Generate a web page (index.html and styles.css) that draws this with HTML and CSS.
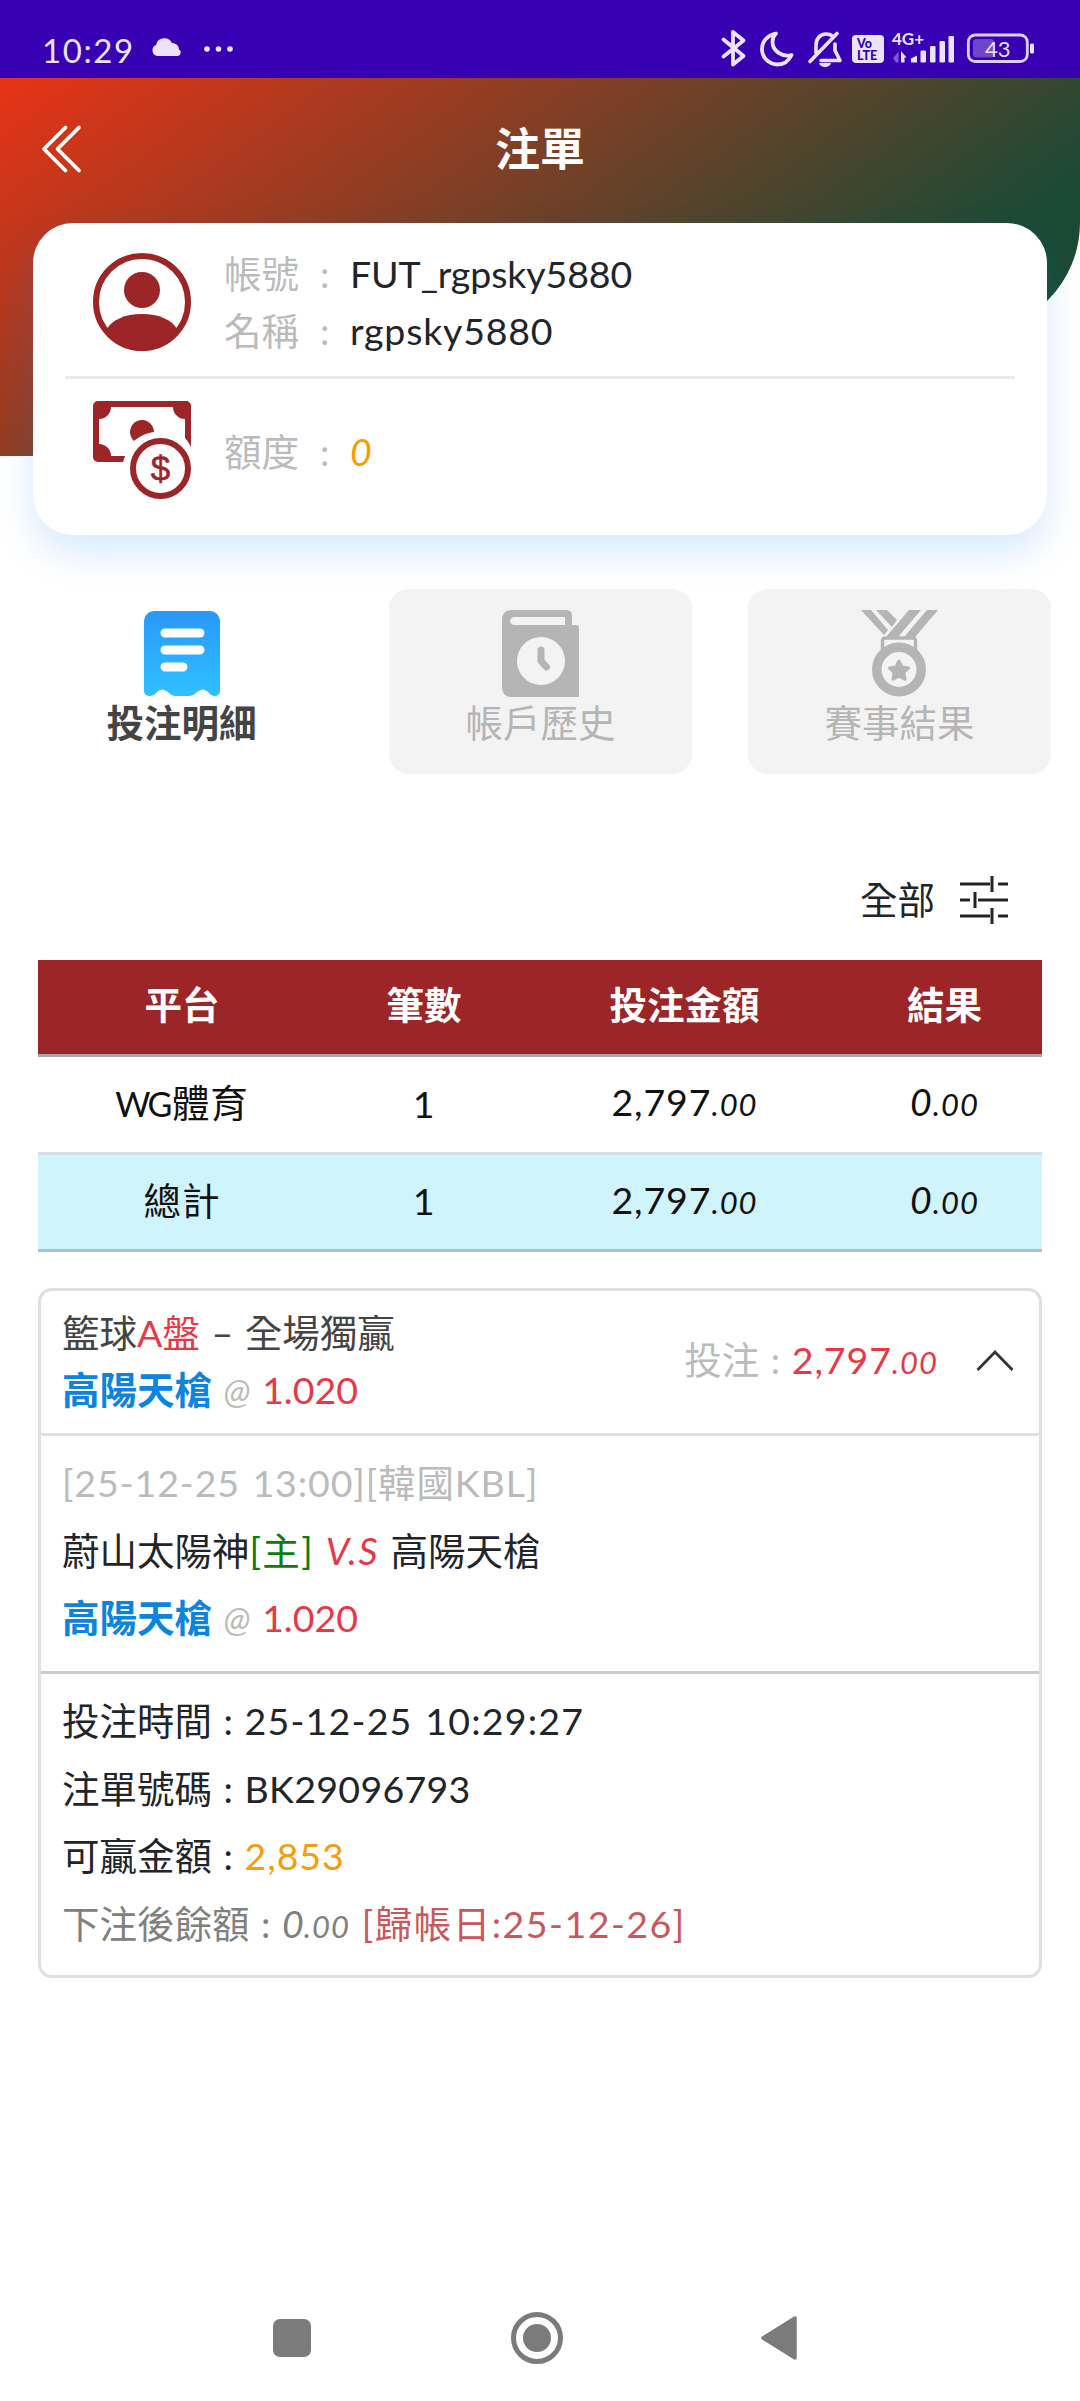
FILE: index.html
```html
<!DOCTYPE html>
<html lang="zh-Hant">
<head>
<meta charset="utf-8">
<title>注單</title>
<link rel="stylesheet" href="styles.css">
</head>
<body>
<div class="status">
  <div class="status-left">
    <span class="clock">10:29</span>
    <svg class="cloud" width="32" height="20" viewBox="0 0 32 20"><path d="M6 19a5.800 5.800 0 0 1-1-11A8.500 8.500 0 0 1 21 6a6.500 6.500 0 0 1 7 6.500 3.500 3.500 0 0 1-1 6.500z"/></svg>
    <svg class="dots" width="30" height="6" viewBox="0 0 30 6"><circle cx="3" cy="3" r="2.800"/><circle cx="14.500" cy="3" r="2.800"/><circle cx="26" cy="3" r="2.800"/></svg>
  </div>
  <svg class="status-icons" width="330" height="60" viewBox="715 20 330 60">
    <g fill="none" stroke="#ebe3fb" stroke-width="3.800" stroke-linejoin="round" stroke-linecap="round">
      <path d="M723.500 39.500 743.500 56 733 64.500V32l10.500 8.500-20 16"/>
      <path d="M776 33.500c-8 1.500-14 7.500-14 15.500a15.500 15.500 0 0 0 15.500 15.500c6.500 0 11.500-4 14-9.500-9 2.500-19-4-19-13 0-3.500 1.500-6.500 3.500-8.500z"/>
      <path d="M837 33.500 810 61.500M816 53v-8c0-6 4-11 10-11 3 0 5 .8 6.500 2M835 44v6.500l5 10H821" stroke-width="3.600"/>
    </g>
    <path d="M819 63h12c-1 5.500-11 5.500-12 0z" fill="#ebe3fb"/>
    <rect x="852" y="35" width="32" height="28" rx="4" fill="#ebe3fb"/>
    <g font-family="Lato, sans-serif" font-weight="900" fill="#3700b3">
      <text x="857" y="47.500" font-size="12.500">Vo</text><text x="857" y="59.500" font-size="12.500">LTE</text>
    </g>
    <text x="892" y="45" font-family="Lato, sans-serif" font-weight="700" font-size="17" fill="#ebe3fb">4G+</text>
    <g fill="#ebe3fb">
      <path d="M893 58l5.500-6v10.500H896z" opacity=".4"/><path d="M901 51l5.500 6.500H904.500V62.500H901z"/>
      <path d="M911 58.500l6-3v7h-6z"/><rect x="920.500" y="50.500" width="5.500" height="12" rx="1.200"/><rect x="930" y="46" width="5.500" height="16.500" rx="1.200"/><rect x="939.500" y="41" width="5.500" height="21.500" rx="1.200"/><rect x="948.500" y="36" width="5.500" height="26.500" rx="1.200"/>
    </g>
    <rect x="973" y="39" width="21" height="18.500" rx="3" fill="#6f45c9"/>
    <rect x="968.300" y="35" width="59" height="26.500" rx="7" fill="none" stroke="#dccff6" stroke-width="2.800"/>
    <rect x="1030" y="43.500" width="4" height="10" rx="1.500" fill="#ebe3fb"/>
    <text x="985" y="57" font-family="Lato, sans-serif" font-size="22" fill="#ebe3fb">43</text>
  </svg>
</div>

<header class="hero">
  <div class="titlebar">
    <svg class="back" width="42" height="50" viewBox="0 0 42 50"><path d="M24.500 3.500 3 25l21.500 21.500M38 3.500 16.500 25 38 46.500" fill="none" stroke="#fff" stroke-width="3.800" stroke-linecap="round" stroke-linejoin="round"/></svg>
    <h1>注單</h1>
  </div>
</header>

<section class="account">
  <div class="account-row user">
    <svg width="98" height="98" viewBox="0 0 98 98"><circle cx="49" cy="49" r="46" fill="none" stroke="#9c2527" stroke-width="6"/><circle cx="49" cy="37" r="18" fill="#9c2527"/><path d="M14 76c5-9 18-15 35-15s30 6 35 15a45 45 0 0 1-70 0z" fill="#9c2527"/></svg>
    <dl>
      <div><dt>帳號</dt><b>:</b><dd>FUT_rgpsky5880</dd></div>
      <div><dt>名稱</dt><b>:</b><dd class="name">rgpsky5880</dd></div>
    </dl>
  </div>
  <div class="account-row credit">
    <svg width="98" height="98" viewBox="0 0 98 98">
      <g fill="#9c2527"><path fill-rule="evenodd" d="M5 0h88a5 5 0 0 1 5 5v41q-3-6-6-9V18A12 12 0 0 1 80 6H18A12 12 0 0 1 6 18v25a12 12 0 0 1 12 12h14l-2 6H5a5 5 0 0 1-5-5V5a5 5 0 0 1 5-5z"/>
      <path d="M41 40a12 12 0 1 1 20-9c-8 1-14 4-20 9z"/></g>
      <circle cx="67.500" cy="67.500" r="27.500" fill="none" stroke="#9c2527" stroke-width="6"/>
      <text x="67.500" y="79.500" text-anchor="middle" font-family="Liberation Sans, sans-serif" font-size="35" fill="#9c2527" stroke="#9c2527" stroke-width=".6">$</text>
    </svg>
    <dl><div><dt>額度</dt><b>:</b><dd class="amber"><i>0</i></dd></div></dl>
  </div>
</section>

<nav class="tabs">
  <a class="tab active">
    <svg width="78" height="87" viewBox="0 0 78 87"><defs><linearGradient id="sheet" x2="0" y2="1"><stop stop-color="#2a98fb"/><stop offset="1" stop-color="#2fc0ff"/></linearGradient></defs><path d="M11 1h56a10 10 0 0 1 10 10v70q0 5-6 5-4-1-6-4-5-5-11 0-4 4-8 4H33q-5 0-8-4-6-5-11 0-3 4-7 4-6 0-6-5V11A10 10 0 0 1 11 1z" fill="url(#sheet)"/><path d="M22 23h35M22 40h35M22 57h18" stroke="#fff" stroke-width="9" stroke-linecap="round"/></svg>
    <span>投注明細</span>
  </a>
  <a class="tab">
    <svg width="78" height="87" viewBox="0 0 78 87"><path fill="#b5b5b5" fill-rule="evenodd" d="M10 0h54q6 0 6 6v9h4q3 0 3 3v69H10Q0 87 0 77V10Q0 0 10 0zM12 7q-4 1-4 4t4 4h51V7z"/><circle cx="39" cy="51" r="24" fill="#f3f3f3"/><path d="M39 40v11l5.500 6" fill="none" stroke="#b5b5b5" stroke-width="7" stroke-linecap="round" stroke-linejoin="round"/></svg>
    <span>帳戶歷史</span>
  </a>
  <a class="tab">
    <svg width="78" height="87" viewBox="0 0 78 87"><g fill="#b5b5b5"><path d="M0 0h10l17 20-4 5zM15 0h11l10 10-5 7zM48 0h12L37 27H25zM66 0h11L54 27H43z"/></g><path d="M21.500 40V31q0-3 3-3h27q3 0 3 3v9" fill="none" stroke="#b5b5b5" stroke-width="3.500"/><circle cx="38" cy="59.500" r="22.200" fill="none" stroke="#b5b5b5" stroke-width="9.500"/><path d="m38 51 3 6 6.500 1-4.700 4.600 1.200 6.600-6-3.200-6 3.200 1.200-6.600-4.700-4.600 6.500-1z" fill="#b5b5b5" stroke="#b5b5b5" stroke-width="3" stroke-linejoin="round"/></svg>
    <span>賽事結果</span>
  </a>
</nav>

<div class="filter">
  <span>全部</span>
  <svg width="48" height="50" viewBox="0 0 48 50"><path d="M0 9h30M38 9h10M32 1v16M0 25h10M18 25h30M15 17v16M0 41h30M38 41h10M32 33v16" fill="none" stroke="#212529" stroke-width="3"/></svg>
</div>

<table class="summary">
  <colgroup><col class="c1"><col class="c2"><col class="c3"><col class="c4"></colgroup>
  <thead><tr><th>平台</th><th>筆數</th><th>投注金額</th><th>結果</th></tr></thead>
  <tbody>
    <tr><td><span class="brand">WG</span>體育</td><td>1</td><td>2,797<i class="cents">.00</i></td><td><i>0</i><i class="cents">.00</i></td></tr>
    <tr class="total"><td>總計</td><td>1</td><td>2,797<i class="cents">.00</i></td><td><i>0</i><i class="cents">.00</i></td></tr>
  </tbody>
</table>

<article class="bet">
  <div class="bet-head">
    <div class="bet-name">
      <p>籃球<span class="red">A盤</span> – 全場獨贏</p>
      <p><strong>高陽天槍</strong> <i class="muted at">@</i> <span class="red">1.020</span></p>
    </div>
    <div class="stake"><span class="muted">投注 : </span><span class="red">2,797<i class="cents">.00</i></span></div>
    <svg width="38" height="22" viewBox="0 0 38 22"><path d="M1.500 20 19 2l17.500 18" fill="none" stroke="#333" stroke-width="2.800"/></svg>
  </div>
  <div class="bet-body">
    <p class="muted time">[25-12-25 13:00][韓國KBL]</p>
    <p>蔚山太陽神<span class="green">[主]</span> <i class="red vs">V.S</i> 高陽天槍</p>
    <p><strong>高陽天槍</strong> <i class="muted at">@</i> <span class="red">1.020</span></p>
  </div>
  <div class="bet-body details">
    <p>投注時間 : <span class="when">25-12-25 10:29:27</span></p>
    <p>注單號碼 : <span class="code">BK29096793</span></p>
    <p>可贏金額 : <span class="amber win">2,853</span></p>
    <p class="gray">下注後餘額 : <i>0</i><i class="cents">.00</i> <span class="due">[歸帳日:25-12-26]</span></p>
  </div>
</article>

<footer class="sysnav">
  <svg width="38" height="38" viewBox="0 0 38 38"><rect width="38" height="38" rx="7"/></svg>
  <svg width="52" height="52" viewBox="0 0 52 52"><circle cx="26" cy="26" r="23.500" fill="none" stroke="#7b7b7b" stroke-width="5"/><circle cx="26" cy="26" r="14"/></svg>
  <svg width="36" height="44" viewBox="0 0 36 44"><path d="M34 2v40L2 22z" stroke="#7b7b7b" stroke-width="3.500" stroke-linejoin="round"/></svg>
</footer>
</body>
</html>
```

FILE: styles.css
```css
* { box-sizing: border-box; margin: 0; padding: 0; }
body {
  width: 1080px;
  height: 2401px;
  display: flex;
  flex-direction: column;
  overflow: hidden;
  background: #fff;
  color: #212529;
  font: 37.500px/57px Lato, "Noto Sans CJK TC", sans-serif;
  word-spacing: 2px;
}
svg { display: block; flex: none; }

.status {
  height: 78px;
  flex: none;
  display: flex;
  justify-content: space-between;
  padding: 20px 35px 0 42px;
  background: #3700b3;
  color: #ebe3fb;
}
.status-left { display: flex; align-items: center; height: 60px; }
.clock { width: 109px; font-size: 33px; letter-spacing: 1.600px; }
.cloud { margin: -6px 21px 0 0; fill: #ebe3fb; }
.dots { margin-top: -3px; fill: #ebe3fb; }

.hero {
  height: 378px;
  flex: none;
  clip-path: path("M0 0H1080V144A110 110 0 0 1 1048 222L900 378H0z");
  background: linear-gradient(144deg, #e83316 0%, #1b4a34 76%);
}
.titlebar { position: relative; display: flex; align-items: center; justify-content: center; height: 142px; }
.back { position: absolute; left: 41px; top: 46px; }
h1 { color: #fff; font-size: 45px; font-weight: 700; line-height: 64px; }

.account {
  position: relative;
  height: 312px;
  flex: none;
  margin: -233px 33px 0;
  padding: 0 32px;
  border-radius: 40px;
  background: #fff;
  box-shadow: 0 18px 36px rgba(15, 130, 255, .17);
}
.account-row { display: flex; align-items: center; gap: 33px; padding-left: 28px; }
.user { height: 156px; padding-top: 4px; border-bottom: 3px solid #e9e9e9; }
.credit { height: 145px; }
.credit svg { margin-top: -4px; }
dl > div { display: flex; height: 57px; }
dt { width: 96px; color: #bbb; }
dl b { width: 30px; color: #bbb; font-weight: 400; }
dd { letter-spacing: -.1px; }
dd.name { letter-spacing: .8px; }
.amber { color: #f59c0b; }

.tabs { display: flex; gap: 56px; height: 185px; flex: none; margin: 54px 0 0 30px; }
.tab {
  width: 303px;
  display: flex;
  flex-direction: column;
  align-items: center;
  padding-top: 21px;
  border-radius: 20px;
  background: #f3f3f3;
  color: #b5b5b5;
}
.tab span { line-height: 52px; }
.tab.active { background: none; color: #444; font-weight: 700; }

.filter { display: flex; align-items: center; justify-content: flex-end; gap: 25px; height: 57px; flex: none; margin: 97px 72px 0 0; }

.summary { width: 1004px; flex: none; margin: 32px 38px 0; table-layout: fixed; border-collapse: separate; border-spacing: 0; color: #111; text-align: center; }
.c1 { width: 288px; } .c2 { width: 196px; } .c3 { width: 325px; } .c4 { width: 195px; }
th { height: 97px; padding-bottom: 6px; border-bottom: 3px solid #aaa5a8; background: #9c2527; color: #fff; font-weight: 700; }
td { height: 98px; padding-bottom: 3px; border-bottom: 3px solid #d5dfe2; }
.total td { height: 97px; border-color: #a9c4ca; background: #cff4fc; }
td, .stake .red, .win { letter-spacing: .9px; }
.brand { font-size: 34px; letter-spacing: -2.500px; margin-right: 2px; }
.cents { font-size: 31px; letter-spacing: 1px; }

.bet { height: 690px; flex: none; margin: 36px 38px 0; border: 3px solid #dfdfdf; border-radius: 14px; }
.bet p { white-space: pre; }
.bet-head { display: flex; align-items: center; height: 145px; padding: 0 25px 2px 21px; border-bottom: 3px solid #dfdfdf; color: #444; }
.bet-name { flex: 1; }
.stake { white-space: pre; margin-right: 38px; }
.bet-body { height: 238px; padding: 13px 21px 0; border-bottom: 3px solid #ccc; }
.bet-body p { line-height: 67.500px; }
.details { border: 0; }
strong { color: #0b84e0; }
.muted { color: #bbb; }
.red { color: #e63946; }
.green { color: #087f08; letter-spacing: 1.400px; }
.gray { color: #808080; }
.due { color: #c9585c; letter-spacing: 1.500px; }
.time { letter-spacing: .9px; }
.when { letter-spacing: 1.200px; }
.code { letter-spacing: .3px; }
.vs { letter-spacing: 1.500px; }
.at { font-size: 35px; }

.sysnav { display: flex; align-items: center; height: 126px; margin-top: auto; padding-left: 273px; fill: #7b7b7b; }
.sysnav svg:nth-child(2) { margin-left: 200px; }
.sysnav svg:nth-child(3) { margin-left: 198px; }
```
